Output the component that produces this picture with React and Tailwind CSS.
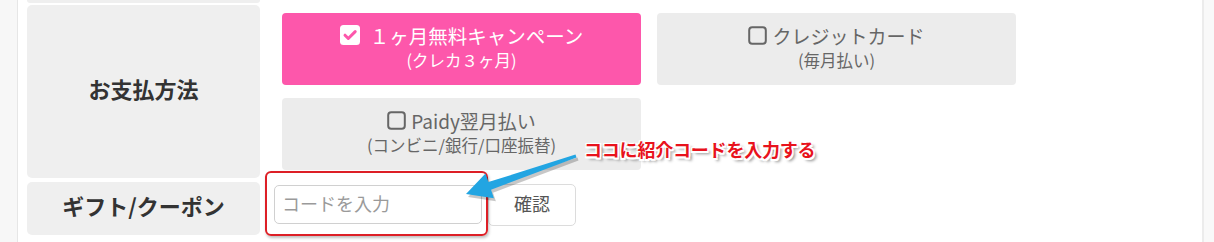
import React from "react";

const jp = "font-['Noto_Sans_CJK_JP','Noto_Sans',sans-serif]";

function CheckedBox() {
  return (
    <svg width="20" height="20" viewBox="0 0 20 20" className="shrink-0">
      <rect x="0" y="0" width="20" height="20" rx="3.5" fill="#fff" />
      <path d="M5 10.2l3.3 3.3L15.2 6.6" fill="none" stroke="#fd57ab" strokeWidth="3" strokeLinecap="round" strokeLinejoin="round" />
    </svg>
  );
}

function EmptyBox() {
  return (
    <svg width="19" height="19" viewBox="0 0 19 19" className="shrink-0">
      <rect x="1.2" y="1.2" width="16.6" height="16.6" rx="3" fill="none" stroke="#666" strokeWidth="2" />
    </svg>
  );
}

function PayOption({ active, title, sub }) {
  return (
    <button
      className={
        active
          ? "flex h-[72px] flex-col items-center justify-center rounded-[4px] bg-[#fd57ab] pb-[6px] text-white"
          : "flex h-[72px] flex-col items-center justify-center rounded-[4px] bg-[#ececec] pb-[6px] text-[#666]"
      }
    >
      <span className={active ? "flex items-center gap-[10px] text-[19.5px] leading-[27px]" : "flex items-center gap-[5px] text-[19px] leading-[27px]"}>
        {active ? <CheckedBox /> : <EmptyBox />}
        {title}
      </span>
      <span className="text-[16.5px] leading-[22px]">{sub}</span>
    </button>
  );
}

export default function App() {
  return (
    <div className={`relative flex h-[242px] w-[1214px] overflow-hidden bg-[#f7f7f7] ${jp}`}>
      <div className="w-[18px] border-r border-[#e6e6e6]" />

      <div className="flex w-[1184px] flex-col bg-white pl-[9px]">
        {/* previous row edge */}
        <div className="h-[3px] w-[233px] rounded-b-[5px] bg-[#efefef]" />

        {/* お支払方法 */}
        <div className="mt-[2px] flex">
          <div className="flex w-[233px] items-center justify-center rounded-[5px] bg-[#efefef] pb-[6px] text-[22px] font-bold text-[#333]">
            お支払方法
          </div>
          <div className="grid grid-cols-[359px_359px] gap-x-[16px] gap-y-[13px] py-[8px] pl-[22px]">
            <PayOption active title="１ヶ月無料キャンペーン" sub="(クレカ３ヶ月)" />
            <PayOption title="クレジットカード" sub="(毎月払い)" />
            <PayOption title="Paidy翌月払い" sub="(コンビニ/銀行/口座振替)" />
          </div>
        </div>

        {/* ギフト/クーポン */}
        <div className="mt-[4px] flex h-[53px]">
          <div className="flex w-[233px] items-center justify-center rounded-[5px] bg-[#efefef] pb-[7px] text-[22px] font-bold text-[#333]">
            ギフト/クーポン
          </div>
          <div className="flex items-start gap-[6px] pl-[14px] pt-[2px]">
            <input
              placeholder="コードを入力"
              className="mt-[1px] h-[39px] w-[208px] rounded-[5px] border border-[#d0d0d0] bg-white px-[7px] pb-[3px] text-[18px] text-[#333] outline-none placeholder:text-[#9a9a9a]"
            />
            <button className="h-[42px] w-[88px] rounded-[5px] border border-[#dcdcdc] bg-white pb-[3px] text-[18px] text-[#555]">
              確認
            </button>
          </div>
        </div>
      </div>

      <div className="flex-1 border-l-2 border-[#ececec] bg-[#f9f9f9]" />

      {/* annotation overlays */}
      <div className="absolute left-[265px] top-[171px] h-[65px] w-[223px] rounded-[6px] border-2 border-[#dd1f26] shadow-[1px_2px_3px_rgba(0,0,0,0.25)]" />
      <span className="absolute left-[584px] top-[136px] whitespace-nowrap text-[18px] font-bold leading-[26px] tracking-[-0.2px] text-[#e8121c] [text-shadow:-1.5px_-1.5px_0_#fff,1.5px_-1.5px_0_#fff,-1.5px_1.5px_0_#fff,1.5px_1.5px_0_#fff,0_1.5px_0_#fff,0_-1.5px_0_#fff,3px_3px_3px_rgba(0,0,0,0.45)]">
        ココに紹介コードを入力する
      </span>
      <svg className="absolute left-0 top-0" width="1214" height="242" viewBox="0 0 1214 242">
        <polygon
          points="466,194 485.5,173.6 488.4,182.1 575.5,154.6 576.5,157.4 491,189.7 493.9,198.2"
          fill="rgba(0,0,0,0.22)"
          transform="translate(2,3)"
        />
        <polygon
          points="466,194 485.5,173.6 488.4,182.1 575.5,154.6 576.5,157.4 491,189.7 493.9,198.2"
          fill="#22a5e2"
        />
      </svg>
    </div>
  );
}
